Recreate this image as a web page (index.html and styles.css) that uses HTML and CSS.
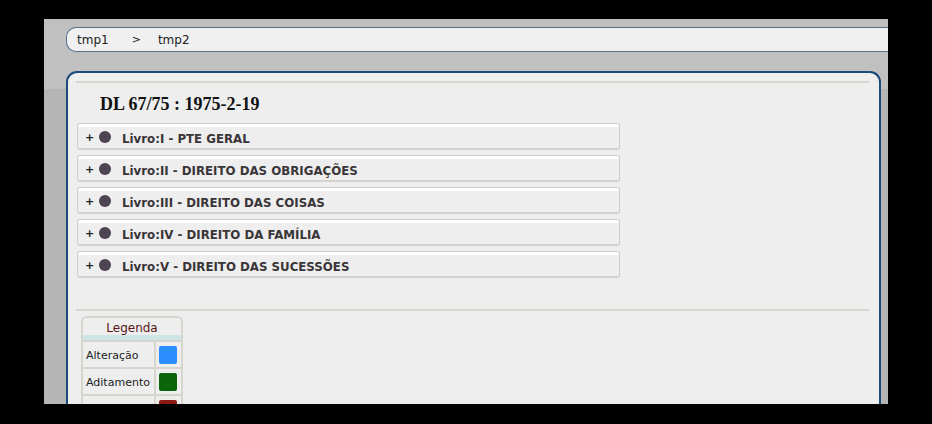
FILE: index.html
```html
<!DOCTYPE html>
<html>
<head>
<meta charset="utf-8">
<link rel="stylesheet" href="styles.css">
</head>
<body>
<div class="screen">
  <div class="crumbs">
    <span class="crumb">tmp1</span>
    <span class="sep">&gt;</span>
    <span class="crumb">tmp2</span>
  </div>
  <div class="panel">
    <div class="rule"></div>
    <h1 class="title">DL 67/75 : 1975-2-19</h1>
    <div class="books">
      <div class="book"><span class="plus">+</span><span class="dot"></span><span class="label">Livro:I - PTE GERAL</span></div>
      <div class="book"><span class="plus">+</span><span class="dot"></span><span class="label">Livro:II - DIREITO DAS OBRIGAÇÕES</span></div>
      <div class="book"><span class="plus">+</span><span class="dot"></span><span class="label">Livro:III - DIREITO DAS COISAS</span></div>
      <div class="book"><span class="plus">+</span><span class="dot"></span><span class="label">Livro:IV - DIREITO DA FAMÍLIA</span></div>
      <div class="book"><span class="plus">+</span><span class="dot"></span><span class="label">Livro:V - DIREITO DAS SUCESSÕES</span></div>
    </div>
    <div class="rule rule-low"></div>
    <table class="legend">
      <tr><th colspan="2" class="legend-head">Legenda</th></tr>
      <tr><td class="legend-name">Alteração</td><td class="legend-swatch"><span class="swatch swatch-blue"></span></td></tr>
      <tr><td class="legend-name">Aditamento</td><td class="legend-swatch"><span class="swatch swatch-green"></span></td></tr>
      <tr><td class="legend-name"></td><td class="legend-swatch"><span class="swatch swatch-red"></span></td></tr>
    </table>
  </div>
</div>
</body>
</html>
```

FILE: styles.css
```css
html, body {
  margin: 0;
  padding: 0;
  background: #000;
  width: 932px;
  height: 424px;
  overflow: hidden;
}

.screen {
  margin: 19px 0 0 44px;
  width: 844px;
  height: 385px;
  overflow: hidden;
  background: linear-gradient(#c0c0c0 0, #c0c0c0 70px, #b5b5b5 70px);
  font-family: "DejaVu Sans", sans-serif;
}

.crumbs {
  margin: 8px -20px 0 22px;
  height: 23px;
  border: 1px solid #50708f;
  border-right: none;
  border-radius: 10px 0 0 10px;
  background: #f0f0f0;
  display: flex;
  align-items: center;
  padding-left: 10px;
  font-size: 12px;
  color: #222;
}

.sep { margin: 0 17px 0 23px; font-size: 11px; }

.panel {
  margin: 19px 0 0 22px;
  width: 811px;
  height: 340px;
  border: 2px solid #1b4a7c;
  border-bottom: none;
  border-radius: 11px 11px 0 0;
  background: #eeeeee;
}

.rule {
  margin: 8px 10px 0 8px;
  height: 2px;
  background: #d6d6ce;
}

.title {
  margin: 10px 0 0 32px;
  font-family: "Liberation Serif", serif;
  font-size: 18px;
  line-height: 22px;
  font-weight: bold;
  color: #111;
}

.books {
  margin: 8px 0 0 9px;
  width: 543px;
  display: flex;
  flex-direction: column;
  gap: 5px;
}

.book {
  box-sizing: border-box;
  height: 27px;
  border: 1px solid #cdcdc9;
  border-bottom: 2px solid #d2d2ce;
  border-radius: 3px;
  background: linear-gradient(#ffffff 0, #ffffff 2px, #eeeeee 4px);
  display: flex;
  align-items: center;
  padding: 2px 0 0 7px;
}

.plus {
  font-size: 11px;
  font-weight: bold;
  color: #222;
  width: 7px;
  line-height: 10px;
  margin-top: 1px;
}

.dot {
  width: 12px;
  height: 12px;
  border-radius: 50%;
  background: #4e4350;
  margin: -1px 11px 0 7px;
}

.label {
  font-size: 11.8px;
  font-weight: bold;
  color: #3a3538;
  margin-top: 4px;
}

.rule-low {
  margin-top: 31px;
}

.legend {
  margin: 5px 0 0 13px;
  border-collapse: separate;
  border-spacing: 0;
  border: 2px solid #d6d6ce;
  border-bottom: none;
  border-radius: 6px 6px 0 0;
  width: 102px;
  font-size: 11px;
  color: #222;
}

.legend-head {
  font-weight: normal;
  font-size: 12px;
  color: #5a1616;
  height: 15px;
  padding: 2px 0 0 0;
  text-align: center;
  border-bottom: 5px solid #cfe6e6;
}

.legend-name {
  height: 23px;
  padding: 2px 0 0 3px;
  border-top: 2px solid #d6d6ce;
  border-right: 2px solid #d6d6ce;
  text-align: left;
}

.legend-swatch {
  padding: 0 3px 0 3px;
  border-top: 2px solid #d6d6ce;
  vertical-align: middle;
}

.swatch {
  display: block;
  width: 18px;
  height: 18px;
  border-radius: 2px;
}

.swatch-blue { background: #2a8eff; }
.swatch-green { background: #0b650b; }
.swatch-red { background: #8b1a14; }
```
